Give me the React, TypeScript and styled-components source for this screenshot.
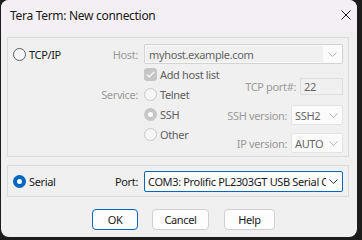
import React from "react";
import styled, { createGlobalStyle } from "styled-components";

const GlobalStyle = createGlobalStyle`
  html, body {
    margin: 0;
    padding: 0;
    background: #1c1c1c;
  }
  body {
    font-family: "Segoe UI", "Noto Sans", "Open Sans", sans-serif;
    font-size: 11px;
    letter-spacing: -0.35px;
    color: #1a1a1a;
  }
`;

const Window = styled.div`
  margin-left: 1px;
  width: 356px;
  height: 237px;
  background: #f0f0f0;
  border-radius: 8px;
  overflow: hidden;
  display: flex;
  flex-direction: column;
`;

const TitleBar = styled.div`
  height: 32px;
  flex: none;
  display: flex;
  align-items: center;
  justify-content: space-between;
  padding: 0 6px 0 9px;
  background: #f4eff4;
`;

const Title = styled.span`
  font-size: 12px;
  letter-spacing: -0.3px;
  color: #1a1a1a;
  margin-top: -1px;
`;

const CloseIcon = styled.svg`
  display: block;
  margin-top: -2px;
`;

const Body = styled.div`
  padding: 5px 8px 0 6px;
  display: flex;
  flex-direction: column;
`;

const Group = styled.div<{ $h: number }>`
  box-sizing: border-box;
  height: ${(p) => p.$h}px;
  border: 1px solid #dcdcdc;
  display: flex;
`;

const TcpGroup = styled(Group)`
  padding: 6px 5px 0 5px;
`;

const SerialGroup = styled(Group)`
  margin-top: 8px;
  padding: 0 5px;
  align-items: center;
`;

const LeftCol = styled.div`
  width: 85px;
  flex: none;
`;

const RightArea = styled.div`
  flex: 1;
  min-width: 0;
  display: flex;
  flex-direction: column;
`;

const Row = styled.div<{ $h?: number }>`
  display: flex;
  align-items: center;
  gap: 6px;
  height: ${(p) => p.$h ?? 20}px;
`;

const Label = styled.span<{ $disabled?: boolean; $w?: number }>`
  color: ${(p) => (p.$disabled ? "#9a9a9a" : "#1a1a1a")};
  white-space: nowrap;
  ${(p) => (p.$w ? `width: ${p.$w}px; text-align: right; flex: none;` : "")}
`;

const Option = styled.label<{ $disabled?: boolean }>`
  display: flex;
  align-items: center;
  gap: 3px;
  height: 20px;
  white-space: nowrap;
  color: ${(p) => (p.$disabled ? "#5f5f5f" : "#1a1a1a")};
`;

type RadioState = "off" | "offDisabled" | "onDisabled" | "on";

const Circle = styled.span<{ $state: RadioState }>`
  box-sizing: border-box;
  width: 13px;
  height: 13px;
  flex: none;
  border-radius: 50%;
  display: flex;
  align-items: center;
  justify-content: center;
  ${(p) =>
    p.$state === "off"
      ? "border: 1px solid #5d5d5d; background: #f6f6f6;"
      : p.$state === "offDisabled"
      ? "border: 1px solid #c8c8c8; background: #f6f6f6;"
      : p.$state === "onDisabled"
      ? "background: #c6c6c6;"
      : "background: #0067c0;"}
  &::after {
    content: "";
    display: ${(p) => (p.$state === "on" || p.$state === "onDisabled" ? "block" : "none")};
    width: 5px;
    height: 5px;
    border-radius: 50%;
    background: #ffffff;
  }
`;

const CheckBox = styled.span`
  width: 13px;
  height: 13px;
  flex: none;
  border-radius: 3px;
  background: #c6c6c6;
  display: flex;
  align-items: center;
  justify-content: center;
`;

const Lower = styled.div`
  display: flex;
  min-width: 0;
`;

const ServiceGrid = styled.div`
  display: grid;
  grid-template-columns: 40px auto;
  column-gap: 6px;
  grid-auto-rows: 20px;
  align-items: center;
  flex: none;
`;

const GridLabel = styled(Label)`
  grid-column: 1;
  text-align: right;
`;

const GridCell = styled.div`
  grid-column: 2;
`;

const Settings = styled.div`
  margin-left: auto;
  padding-top: 14px;
  display: flex;
  flex-direction: column;
  align-items: flex-end;
`;

const SettingRow = styled.div<{ $mt?: number; $h: number }>`
  display: flex;
  align-items: center;
  gap: 4px;
  height: ${(p) => p.$h}px;
  margin-top: ${(p) => p.$mt ?? 0}px;
`;

type ComboKind = "edit" | "list" | "focused";

const Combo = styled.div<{ $kind: ComboKind; $w?: number; $h: number }>`
  box-sizing: border-box;
  display: flex;
  height: ${(p) => p.$h}px;
  ${(p) => (p.$w ? `width: ${p.$w}px; flex: none;` : "flex: 1;")}
  min-width: 0;
  padding: 1px;
  border-radius: 2px;
  border: 1px solid
    ${(p) => (p.$kind === "focused" ? "#0067c0" : p.$kind === "edit" ? "#d2d2d2" : "#e3e3e3")};
  background: ${(p) => (p.$kind === "focused" ? "#fcfdff" : "#fbfbfb")};
`;

const ComboText = styled.span<{ $kind: ComboKind }>`
  flex: 1;
  min-width: 0;
  overflow: hidden;
  white-space: nowrap;
  display: flex;
  align-items: center;
  padding-left: ${(p) => (p.$kind === "edit" ? 3 : 2)}px;
  color: ${(p) => (p.$kind === "focused" ? "#1a1a1a" : "#666666")};
  background: ${(p) => (p.$kind === "edit" ? "#f0f0f0" : "transparent")};
`;

const ComboArrow = styled.span<{ $w: number }>`
  width: ${(p) => p.$w}px;
  flex: none;
  display: flex;
  align-items: center;
  justify-content: center;
`;

const PortBox = styled.div`
  box-sizing: border-box;
  width: 43px;
  height: 17px;
  border: 1px solid #dedede;
  background: #f0f0f0;
  color: #666666;
  padding-left: 3px;
  display: flex;
  align-items: center;
`;

const ButtonRow = styled.div`
  display: flex;
  margin-top: 12px;
  padding-left: 85px;
`;

const Button = styled.button<{ $w: number; $primary?: boolean; $ml?: number }>`
  box-sizing: border-box;
  width: ${(p) => p.$w}px;
  height: 21px;
  margin-left: ${(p) => p.$ml ?? 0}px;
  padding: 0;
  border-radius: 4px;
  border: 1px solid ${(p) => (p.$primary ? "#0067c0" : "#d0d0d0")};
  background: #fdfdfd;
  font-family: inherit;
  font-size: 11px;
  letter-spacing: inherit;
  color: #1a1a1a;
`;

const Chevron = ({ color }: { color: string }) => (
  <svg width="9" height="5" viewBox="0 0 9 5">
    <polyline points="0.5,0.5 4.5,4.5 8.5,0.5" fill="none" stroke={color} strokeWidth="1" />
  </svg>
);

const Radio = ({ state, children }: { state: RadioState; children: React.ReactNode }) => (
  <Option $disabled={state === "offDisabled" || state === "onDisabled"}>
    <Circle $state={state} />
    {children}
  </Option>
);

const Dropdown = ({
  kind,
  text,
  w,
  h,
  arrowW,
}: {
  kind: ComboKind;
  text: string;
  w?: number;
  h: number;
  arrowW: number;
}) => (
  <Combo $kind={kind} $w={w} $h={h}>
    <ComboText $kind={kind}>{text}</ComboText>
    <ComboArrow $w={arrowW}>
      <Chevron color={kind === "focused" ? "#3a3a3a" : "#b4b4b4"} />
    </ComboArrow>
  </Combo>
);

export default function App() {
  return (
    <>
      <GlobalStyle />
      <Window>
        <TitleBar>
          <Title>Tera Term: New connection</Title>
          <CloseIcon width="10" height="10" viewBox="0 0 10 10">
            <path d="M0.5 0.5 L9.5 9.5 M9.5 0.5 L0.5 9.5" stroke="#1a1a1a" strokeWidth="1" />
          </CloseIcon>
        </TitleBar>
        <Body>
          <TcpGroup $h={120}>
            <LeftCol>
              <Radio state="off">TCP/IP</Radio>
            </LeftCol>
            <RightArea>
              <Row>
                <Label $disabled $w={40}>
                  Host:
                </Label>
                <Dropdown kind="edit" text="myhost.example.com" h={20} arrowW={18} />
              </Row>
              <Lower>
                <ServiceGrid>
                  <GridCell>
                    <Option $disabled>
                      <CheckBox>
                        <svg width="9" height="7" viewBox="0 0 9 7">
                          <polyline
                            points="0.8,3.6 3.2,6 8.2,0.8"
                            fill="none"
                            stroke="#ffffff"
                            strokeWidth="1.2"
                          />
                        </svg>
                      </CheckBox>
                      Add host list
                    </Option>
                  </GridCell>
                  <GridLabel $disabled>Service:</GridLabel>
                  <GridCell>
                    <Radio state="offDisabled">Telnet</Radio>
                  </GridCell>
                  <GridCell>
                    <Radio state="onDisabled">SSH</Radio>
                  </GridCell>
                  <GridCell>
                    <Radio state="offDisabled">Other</Radio>
                  </GridCell>
                </ServiceGrid>
                <Settings>
                  <SettingRow $h={17}>
                    <Label $disabled>TCP port#:</Label>
                    <PortBox>22</PortBox>
                  </SettingRow>
                  <SettingRow $h={20} $mt={10}>
                    <Label $disabled>SSH version:</Label>
                    <Dropdown kind="list" text="SSH2" w={52} h={20} arrowW={15} />
                  </SettingRow>
                  <SettingRow $h={20} $mt={8}>
                    <Label $disabled>IP version:</Label>
                    <Dropdown kind="list" text="AUTO" w={52} h={20} arrowW={15} />
                  </SettingRow>
                </Settings>
              </Lower>
            </RightArea>
          </TcpGroup>
          <SerialGroup $h={32}>
            <LeftCol>
              <Radio state="on">Serial</Radio>
            </LeftCol>
            <RightArea>
              <Row $h={21}>
                <Label $w={40}>Port:</Label>
                <Dropdown
                  kind="focused"
                  text="COM3: Prolific PL2303GT USB Serial COM Port (COM3)"
                  h={21}
                  arrowW={15}
                />
              </Row>
            </RightArea>
          </SerialGroup>
          <ButtonRow>
            <Button $w={46} $primary>
              OK
            </Button>
            <Button $w={57} $ml={14}>
              Cancel
            </Button>
            <Button $w={51} $ml={15}>
              Help
            </Button>
          </ButtonRow>
        </Body>
      </Window>
    </>
  );
}
